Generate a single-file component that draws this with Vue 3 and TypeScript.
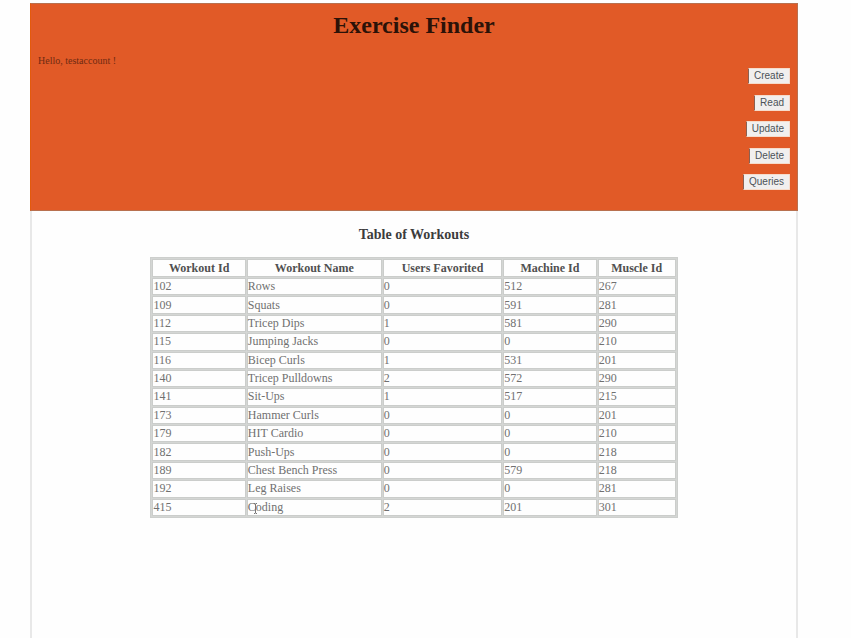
<script setup lang="ts">
interface Workout {
  id: number
  name: string
  favorited: number
  machineId: number
  muscleId: number
}

const actions: string[] = ['Create', 'Read', 'Update', 'Delete', 'Queries']

const workouts: Workout[] = [
  { id: 102, name: 'Rows', favorited: 0, machineId: 512, muscleId: 267 },
  { id: 109, name: 'Squats', favorited: 0, machineId: 591, muscleId: 281 },
  { id: 112, name: 'Tricep Dips', favorited: 1, machineId: 581, muscleId: 290 },
  { id: 115, name: 'Jumping Jacks', favorited: 0, machineId: 0, muscleId: 210 },
  { id: 116, name: 'Bicep Curls', favorited: 1, machineId: 531, muscleId: 201 },
  { id: 140, name: 'Tricep Pulldowns', favorited: 2, machineId: 572, muscleId: 290 },
  { id: 141, name: 'Sit-Ups', favorited: 1, machineId: 517, muscleId: 215 },
  { id: 173, name: 'Hammer Curls', favorited: 0, machineId: 0, muscleId: 201 },
  { id: 179, name: 'HIT Cardio', favorited: 0, machineId: 0, muscleId: 210 },
  { id: 182, name: 'Push-Ups', favorited: 0, machineId: 0, muscleId: 218 },
  { id: 189, name: 'Chest Bench Press', favorited: 0, machineId: 579, muscleId: 218 },
  { id: 192, name: 'Leg Raises', favorited: 0, machineId: 0, muscleId: 281 },
  { id: 415, name: 'Coding', favorited: 2, machineId: 201, muscleId: 301 },
]

const hoveredId = 415
</script>

<template>
  <div class="page">
    <header class="banner">
      <h1>Exercise Finder</h1>
      <p class="greeting">Hello, testaccount !</p>
      <nav class="actions">
        <button v-for="action in actions" :key="action" type="button">{{ action }}</button>
      </nav>
    </header>
    <main class="content">
      <h2 id="workouts-title">Table of Workouts</h2>
      <table aria-labelledby="workouts-title">
        <colgroup>
          <col class="col-id" />
          <col class="col-name" />
          <col class="col-users" />
          <col class="col-machine" />
          <col class="col-muscle" />
        </colgroup>
        <thead>
          <tr>
            <th scope="col">Workout Id</th>
            <th scope="col">Workout Name</th>
            <th scope="col">Users Favorited</th>
            <th scope="col">Machine Id</th>
            <th scope="col">Muscle Id</th>
          </tr>
        </thead>
        <tbody>
          <tr v-for="w in workouts" :key="w.id">
            <td>{{ w.id }}</td>
            <td class="name">
              {{ w.name }}
              <svg v-if="w.id === hoveredId" class="caret" viewBox="0 0 5 13" aria-hidden="true">
                <path d="M1 1.5h1l.5.5.5-.5h1M2.5 2v9M1 11.5h1l.5-.5.5.5h1" />
              </svg>
            </td>
            <td>{{ w.favorited }}</td>
            <td>{{ w.machineId }}</td>
            <td>{{ w.muscleId }}</td>
          </tr>
        </tbody>
      </table>
    </main>
  </div>
</template>

<style>
body {
  background: #fefefe;
}
</style>

<style scoped>
.page {
  box-sizing: border-box;
  display: flex;
  flex-direction: column;
  min-height: calc(100vh - 3px);
  margin: 3px 53px 0 30px;
  font-family: "Liberation Serif", "Times New Roman", serif;
}

.banner {
  display: flex;
  flex-direction: column;
  padding: 7px;
  border: 1px solid #b8704f;
  border-left-color: #e45a0c;
  background: #e15a27;
}

h1 {
  margin: 0;
  color: #2b1208;
  font-size: 24px;
  line-height: 28px;
  text-align: center;
}

.greeting {
  margin: 16px 0 0;
  color: #6e2a12;
  font-size: 10px;
  line-height: 12px;
}

.actions {
  display: flex;
  flex-direction: column;
  align-items: flex-end;
  justify-content: space-between;
  min-height: 122px;
  padding: 1px 0 13px;
}

button {
  height: 16px;
  padding: 0 5px;
  border: 1px solid #f6dccb;
  border-left-color: #8a6152;
  border-radius: 1px;
  background: #f1efee;
  color: #4c5258;
  font-family: "Liberation Sans", Arial, sans-serif;
  font-size: 10px;
  line-height: 14px;
}

.content {
  flex: 1;
  display: flex;
  flex-direction: column;
  align-items: center;
  padding-top: 16px;
  border: 2px solid #e8e8e8;
  border-width: 0 2px;
}

h2 {
  margin: 0 0 14px;
  color: #3c3c3c;
  font-size: 14px;
  line-height: 16px;
}

table {
  width: 69%;
  height: 261px;
  table-layout: fixed;
  border: 1px solid #cdcfcd;
  border-collapse: separate;
  border-spacing: 1px;
  background: #d4d6d4;
  color: #707070;
  font-size: 12px;
  line-height: 13px;
}

th,
td {
  padding: 0;
  border: 1px solid #cbcdcb;
  background: #fefefe;
}

th {
  height: 16px;
  color: #505050;
  text-align: center;
}

td {
  text-align: left;
}

.name {
  position: relative;
}

.caret {
  position: absolute;
  top: 2px;
  left: 5px;
  width: 5px;
  height: 13px;
  fill: none;
  stroke: #777777;
  stroke-width: 1;
}

.col-id {
  width: 18%;
}

.col-name {
  width: 26%;
}

.col-users {
  width: 23%;
}

.col-machine {
  width: 18%;
}

.col-muscle {
  width: 15%;
}
</style>
